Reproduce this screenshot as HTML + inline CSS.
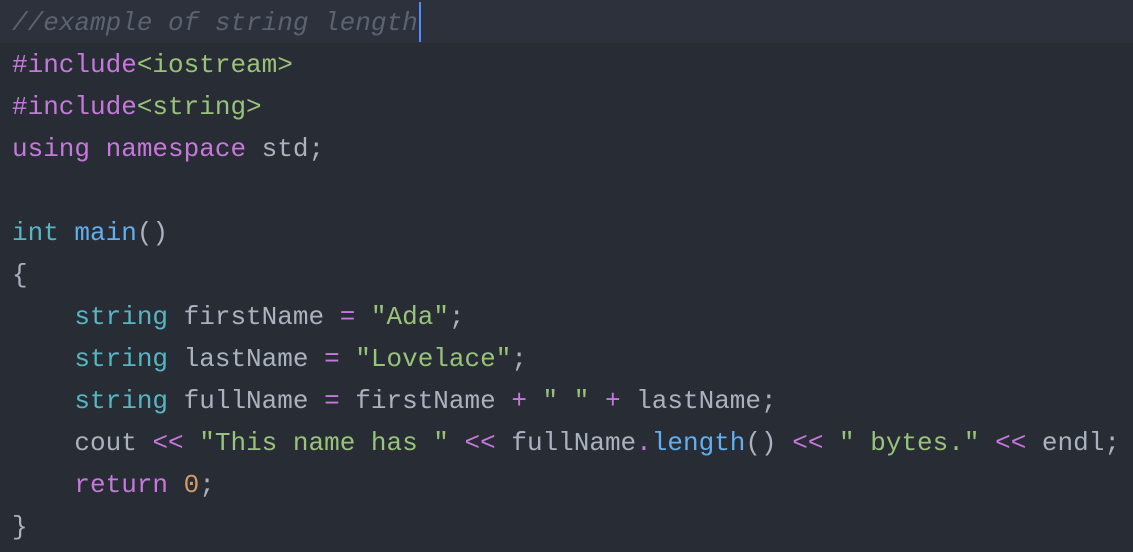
<!DOCTYPE html>
<html><head><style>
html,body{margin:0;padding:0;background:#282c34;width:1133px;height:552px;overflow:hidden}
pre{margin:0;padding:2px 0 0 12px;font-family:"Liberation Mono",monospace;font-size:26px;line-height:42px;color:#abb2bf;position:relative}
.hl{position:absolute;left:0;top:0;width:1133px;height:43px;background:#2c313c}
.cur{position:absolute;left:419px;top:2px;width:2px;height:40px;background:#528bff}
span{position:relative}
.c{color:#5c6370;font-style:italic}.k{color:#c678dd}.s{color:#98c379}.t{color:#56b6c2}.f{color:#61afef}.n{color:#d19a66}
</style></head><body>
<div class="hl"></div><div class="cur"></div>
<pre><span class="c">//example of string length</span>
<span class="k">#include</span><span class="s">&lt;iostream&gt;</span>
<span class="k">#include</span><span class="s">&lt;string&gt;</span>
<span class="k">using</span> <span class="k">namespace</span> std;

<span class="t">int</span> <span class="f">main</span>()
{
    <span class="t">string</span> firstName <span class="k">=</span> <span class="s">"Ada"</span>;
    <span class="t">string</span> lastName <span class="k">=</span> <span class="s">"Lovelace"</span>;
    <span class="t">string</span> fullName <span class="k">=</span> firstName <span class="k">+</span> <span class="s">" "</span> <span class="k">+</span> lastName;
    cout <span class="k">&lt;&lt;</span> <span class="s">"This name has "</span> <span class="k">&lt;&lt;</span> fullName<span class="k">.</span><span class="f">length</span>() <span class="k">&lt;&lt;</span> <span class="s">" bytes."</span> <span class="k">&lt;&lt;</span> endl;
    <span class="k">return</span> <span class="n">0</span>;
}</pre>
</body></html>
